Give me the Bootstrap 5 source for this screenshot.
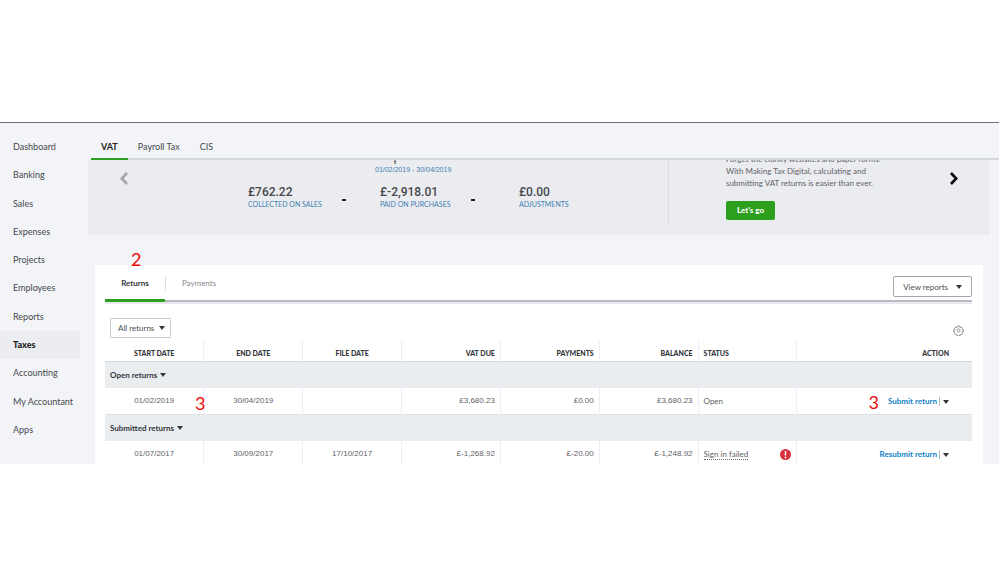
<!DOCTYPE html>
<html lang="en-GB">
<head>
<meta charset="utf-8">
<meta name="viewport" content="width=device-width, initial-scale=1">
<title>Taxes - VAT returns</title>
<link href="https://cdn.jsdelivr.net/npm/bootstrap@5.3.0/dist/css/bootstrap.min.css" rel="stylesheet">
<style>
  body { font-family: Lato, "Liberation Sans", sans-serif; font-size: 9px; line-height: 12px; color: #4b4e53; background: #fff; }
  button, select { font-family: inherit; }
  .app-shell { margin-top: 122px; border-top: 1px solid #6f7073; background: #f3f4f8; }
  .side-menu { width: 80px; flex: none; padding: 10px 0 20px; }
  .side-menu .nav-link { flex: 1; display: flex; align-items: center; padding: 0 0 0 13px; color: #45484d; white-space: nowrap; }
  .side-menu .nav-link.active { background: #ebedf1; color: #222; font-weight: 900; }
  .main-area { margin-left: 8px; min-width: 0; }
  .tax-tabs { margin-left: 3px; height: 37px; border-bottom: 2px solid #d5d8dd; }
  .tax-tabs .nav-link { padding: 18px 10px 5px; margin-bottom: -2px; line-height: 12px; color: #45484d; border-bottom: 2px solid transparent; }
  .tax-tabs .nav-link.active { color: #222; font-weight: 700; border-color: #2ca01c; }
  .hero { margin-right: 9px; height: 75px; background: #ebecf0; overflow: hidden; }
  .hero-stats { flex: none; width: 64.4%; padding-left: 32px; margin-bottom: 9px; border-right: 1px solid #dcdee3; }
  .hero-note { flex: 1; padding: 0 32px 0 57px; font-size: 8px; }
  .hero-note p { margin: -7px 0 12px; white-space: nowrap; color: #5f6267; }
  .arrow-btn { background: none; border: 0; padding: 0; line-height: 0; }
  .go-btn { background: #2ca01c; color: #fff; font-size: 8px; line-height: 12px; font-weight: 900; padding: 3px 11px 4px; border: 0; border-radius: 2px; }
  .go-btn:hover { background: #238a15; color: #fff; }
  .stat-grid { display: grid; grid-template-columns: 94px 38px 91px 48px auto; margin-left: 128px; }
  .period { font-family: "Liberation Sans", Arial, sans-serif; font-size: 7px; line-height: 12px; margin: -9px 0 8px 247px; }
  .period-title { font-size: 14px; line-height: 13px; color: #222; padding-left: 18px; }
  .period a, .stat-label { color: #3f7fb0; text-decoration: none; }
  .amount { font-family: Roboto, "Liberation Sans", sans-serif; font-size: 12px; line-height: 14px; font-weight: 500; color: #45484d; }
  .stat-label { font-size: 7px; line-height: 10px; display: block; white-space: nowrap; }
  .minus { width: 4px; height: 2px; background: #222; align-self: end; margin-bottom: 8px; }
  .panel { margin: 30px 16px 0 7px; padding: 11px 11px 0 10px; background: #fff; }
  .panel-bar { height: 26px; border-bottom: 2px solid #b9bbc6; box-shadow: 0 2px 0 #e8e9ee; }
  .panel-tab { width: 60px; background: none; border: 0; padding: 0 0 9px; line-height: 12px; height: 23px; font-size: 8px; color: #888b90; }
  .panel-tab + .tab-rule + .panel-tab { width: 66px; }
  .panel-tab.active { height: 26px; color: #33363a; font-weight: 700; border-bottom: 3px solid #2ca01c; }
  .tab-rule { width: 1px; height: 15px; background: #dcdee3; }
  .caret { display: inline-block; border: 3px solid transparent; border-top: 4px solid #33363a; border-bottom: 0; }
  .view-btn { border: 1px solid #a4a7ad; border-radius: 2px; background: #fff; color: #4b4e53; font-size: 8px; line-height: 12px; padding: 4px 9px 3px; }
  .filter-wrap { position: relative; }
  .filter-wrap .caret { position: absolute; right: 6px; top: 8px; pointer-events: none; }
  .filter { appearance: none; width: 61px; height: 20px; border: 1px solid #c5c8cf; border-radius: 1px; background: #fff; color: #4b4e53; font-size: 8px; padding: 0 0 0 7px; }
  .toolbar-row { padding: 16px 8px 0 5px; }
  .returns { table-layout: fixed; width: 100%; margin-top: 3px; font-size: 8px; line-height: 12px; color: #5f6267; }
  .returns th, .returns td { padding: 7px 5px; white-space: nowrap; }
  .returns .num-cell { font-family: "Liberation Sans", Arial, sans-serif; }
  .returns th { font-size: 7px; font-weight: 900; color: #33363a; padding: 6px 5px 2px; }
  .returns th + th, .returns td + td { border-left: 1px solid #eceef1; }
  .returns thead { border-bottom: 1px solid #d5d8dc; }
  .returns .group-row { background: #e9edf0; }
  .returns .last-row td { padding-bottom: 4px; }
  .group-btn { background: none; border: 0; padding: 0; font-size: 8px; line-height: 12px; font-weight: 700; color: #33363a; display: flex; align-items: center; gap: 3px; }
  .returns .action-cell { padding-right: 23px; }
  .action-cell a { color: #0f7fc9; font-weight: 700; text-decoration: none; }
  .split { width: 1px; height: 9px; background: #b5b8bd; margin: 0 3px 0 2px; }
  .more-btn { border: 0; padding: 0; background: none; line-height: 4px; }
  .signin { border-bottom: 1px dotted #686b70; line-height: 10px; }
  .step { position: absolute; font-family: Lato, sans-serif; font-size: 18px; line-height: 20px; color: #f00b0b; }
  .step-tab { left: 26px; top: -27px; }
  .step-row { left: 90px; top: 5px; }
  .step-action { left: 71px; top: 4px; }
</style>
<script src="https://cdn.jsdelivr.net/npm/bootstrap@5.3.0/dist/js/bootstrap.bundle.min.js"></script>
</head>
<body>
<div class="app-shell d-flex">
  <nav class="side-menu nav flex-column flex-nowrap" aria-label="Main">
    <a class="nav-link" href="#">Dashboard</a>
    <a class="nav-link" href="#">Banking</a>
    <a class="nav-link" href="#">Sales</a>
    <a class="nav-link" href="#">Expenses</a>
    <a class="nav-link" href="#">Projects</a>
    <a class="nav-link" href="#">Employees</a>
    <a class="nav-link" href="#">Reports</a>
    <a class="nav-link active" href="#" aria-current="page">Taxes</a>
    <a class="nav-link" href="#">Accounting</a>
    <a class="nav-link" href="#">My Accountant</a>
    <a class="nav-link" href="#">Apps</a>
  </nav>
  <main class="main-area flex-grow-1">
    <nav class="tax-tabs nav" aria-label="Taxes">
      <a class="nav-link active" href="#">VAT</a>
      <a class="nav-link" href="#">Payroll Tax</a>
      <a class="nav-link" href="#">CIS</a>
    </nav>

    <section class="hero d-flex">
      <div class="hero-stats">
        <div class="d-flex">
          <button class="arrow-btn align-self-start mt-2 pt-1" type="button" aria-label="Previous">
            <svg width="8" height="13" viewBox="0 0 8 13" fill="none" stroke="#a3a5a8" stroke-width="2.600"><path d="M7 1 1.800 6.500 7 12"/></svg>
          </button>
          <div class="period flex-grow-1">
            <div class="period-title">,</div>
            <a href="#">01/02/2019 - 30/04/2019</a>
          </div>
        </div>
        <div class="stat-grid">
          <div><div class="amount">£762.22</div><a class="stat-label" href="#">COLLECTED ON SALES</a></div>
          <span class="minus"></span>
          <div><div class="amount">£-2,918.01</div><a class="stat-label" href="#">PAID ON PURCHASES</a></div>
          <span class="minus"></span>
          <div><div class="amount">£0.00</div><a class="stat-label" href="#">ADJUSTMENTS</a></div>
        </div>
      </div>
      <div class="hero-note d-flex justify-content-between">
        <div>
          <p>Forget the clunky websites and paper forms.<br>With Making Tax Digital, calculating and<br>submitting VAT returns is easier than ever.</p>
          <button class="go-btn" type="button">Let's go</button>
        </div>
        <button class="arrow-btn align-self-start mt-2 pt-1" type="button" aria-label="Next">
          <svg width="8" height="13" viewBox="0 0 8 13" fill="none" stroke="#0b0b0b" stroke-width="2.600"><path d="M1 1 6.200 6.500 1 12"/></svg>
        </button>
      </div>
    </section>

    <section class="panel">
      <div class="panel-bar d-flex position-relative">
        <button class="panel-tab active" type="button">Returns</button>
        <span class="tab-rule"></span>
        <button class="panel-tab" type="button">Payments</button>
        <button class="view-btn ms-auto d-flex align-items-center align-self-start" type="button">View reports<span class="caret ms-2"></span></button>
        <span class="step step-tab">2</span>
      </div>
      <div class="toolbar-row d-flex justify-content-between align-items-center">
        <div class="filter-wrap">
          <select class="filter" aria-label="Filter returns"><option>All returns</option></select>
          <span class="caret"></span>
        </div>
        <button class="arrow-btn pt-1" type="button" aria-label="Table settings">
          <svg width="11" height="11" viewBox="0 0 22 22" fill="none" stroke="#8d9096" stroke-width="2"><path d="M9 2h4l1 3 3-1 2 3-1 2 3 1v3l-3 1 1 3-3 3-2-1-1 3H9l-1-3-2 1-3-3 1-3-3-1v-3l3-1-1-2 2-3 3 1z"/><circle cx="11" cy="11" r="3"/></svg>
        </button>
      </div>
      <table class="returns">
        <colgroup><col style="width:11.4%"><col style="width:11.4%"><col style="width:11.4%"><col style="width:11.4%"><col style="width:11.4%"><col style="width:11.4%"><col style="width:11.4%"><col></colgroup>
        <thead>
          <tr><th class="text-center">START DATE</th><th class="text-center">END DATE</th><th class="text-center">FILE DATE</th><th class="text-end">VAT DUE</th><th class="text-end">PAYMENTS</th><th class="text-end">BALANCE</th><th>STATUS</th><th class="text-end action-cell">ACTION</th></tr>
        </thead>
        <tbody>
          <tr class="group-row"><td colspan="8"><button class="group-btn" type="button">Open returns <span class="caret"></span></button></td></tr>
          <tr>
            <td class="num-cell text-center position-relative">01/02/2019<span class="step step-row">3</span></td><td class="num-cell text-center">30/04/2019</td><td></td><td class="num-cell text-end">£3,680.23</td><td class="num-cell text-end">£0.00</td><td class="num-cell text-end">£3,680.23</td><td>Open</td>
            <td class="action-cell position-relative"><span class="step step-action">3</span><div class="d-flex justify-content-end align-items-center"><a href="#">Submit return</a><span class="split"></span><button class="more-btn" type="button" aria-label="More actions"><span class="caret"></span></button></div></td>
          </tr>
          <tr class="group-row border-top"><td colspan="8"><button class="group-btn" type="button">Submitted returns <span class="caret"></span></button></td></tr>
          <tr class="last-row">
            <td class="num-cell text-center">01/07/2017</td><td class="num-cell text-center">30/09/2017</td><td class="num-cell text-center">17/10/2017</td><td class="num-cell text-end">£-1,268.92</td><td class="num-cell text-end">£-20.00</td><td class="num-cell text-end">£-1,248.92</td>
            <td><div class="d-flex justify-content-between align-items-center"><span class="signin">Sign in failed</span><svg width="11" height="11" viewBox="0 0 22 22" role="img" aria-label="Error"><circle cx="11" cy="11" r="11" fill="#d9303e"/><path d="M11 4v9" stroke="#fff" stroke-width="3"/><circle cx="11" cy="17" r="2" fill="#fff"/></svg></div></td>
            <td class="action-cell"><div class="d-flex justify-content-end align-items-center"><a href="#">Resubmit return</a><span class="split"></span><button class="more-btn" type="button" aria-label="More actions"><span class="caret"></span></button></div></td>
          </tr>
        </tbody>
      </table>
    </section>
  </main>
</div>
</body>
</html>
